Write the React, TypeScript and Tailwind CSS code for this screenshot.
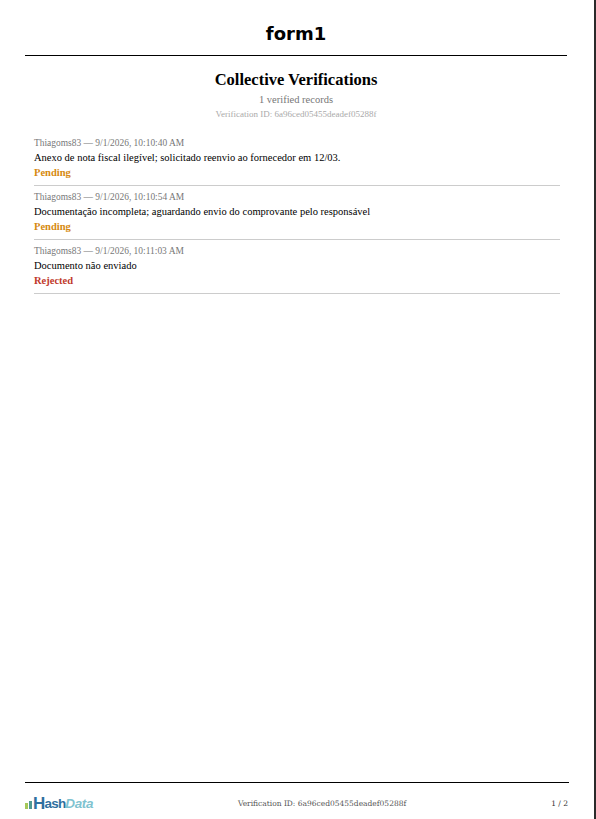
const records = [
  {
    meta: "Thiagoms83 — 9/1/2026, 10:10:40 AM",
    text: "Anexo de nota fiscal ilegível; solicitado reenvio ao fornecedor em 12/03.",
    status: "Pending",
    color: "text-[#d68910]",
  },
  {
    meta: "Thiagoms83 — 9/1/2026, 10:10:54 AM",
    text: "Documentação incompleta; aguardando envio do comprovante pelo responsável",
    status: "Pending",
    color: "text-[#d68910]",
  },
  {
    meta: "Thiagoms83 — 9/1/2026, 10:11:03 AM",
    text: "Documento não enviado",
    status: "Rejected",
    color: "text-[#c0392b]",
  },
];

const App = () => {
  return (
    <div className="flex h-[819px] w-[596px] overflow-hidden bg-white font-['Liberation_Serif',serif] text-black">
      <div className="flex min-w-0 flex-1 flex-col pl-[25px]">
        {/* Header */}
        <header className="mr-[27px] flex h-[56px] items-center justify-center border-b border-black pt-[13px]">
          <h1 className="font-['DejaVu_Sans',sans-serif] text-[18px] leading-none font-bold">form1</h1>
        </header>

        {/* Title */}
        <div className="mr-[27px] flex flex-col items-center pt-[14px]">
          <h2 className="text-[16.5px] leading-[20px] font-bold">Collective Verifications</h2>
          <p className="mt-[3px] text-[10.5px] leading-[14px] text-[#777]">1 verified records</p>
          <p className="mt-[1px] text-[9px] leading-[12px] text-[#aaa]">Verification ID: 6a96ced05455deadef05288f</p>
        </div>

        {/* Records */}
        <div className="mt-[12px] mr-[34px] ml-[9px] flex flex-1 flex-col">
          {records.map((r) => (
            <div key={r.meta} className="h-[54px] border-b border-[#ccc] pt-[5px]">
              <p className="text-[9.45px] leading-[13px] text-[#777]">{r.meta}</p>
              <p className="text-[10.5px] leading-[15px]">{r.text}</p>
              <p className={`text-[10.5px] leading-[15px] font-bold ${r.color}`}>{r.status}</p>
            </div>
          ))}
        </div>

        {/* Footer */}
        <footer className="mr-[25px] flex h-[37px] items-start justify-between border-t border-black pt-[12px] pr-[1px]">
          <div className="flex h-[18px] w-[68px] items-end font-['Liberation_Sans',sans-serif] leading-[18px] font-bold whitespace-nowrap">
            <svg width="8" height="8" viewBox="0 0 8 8" className="mb-[4px] shrink-0">
              <rect x="0" y="2" width="3" height="6" fill="#a5c85a" />
              <rect x="4" y="0" width="3" height="8" fill="#4f9a94" />
            </svg>
            <span className="text-[17px] tracking-[-0.8px] text-[#2f70a0]">H</span>
            <span className="text-[13.5px] tracking-[-0.8px] text-[#2f70a0]">ash</span>
            <span className="text-[13.5px] tracking-[-0.4px] text-[#7fc3d0] italic">Data</span>
          </div>
          <span className="font-['DejaVu_Serif',serif] text-[7.5px] leading-[18px] text-[#555]">Verification ID: 6a96ced05455deadef05288f</span>
          <span className="font-['DejaVu_Serif',serif] text-[7.5px] leading-[18px] text-[#333]">1 / 2</span>
        </footer>
      </div>

      {/* Window edge */}
      <div className="w-[2px] bg-[#2b2b2b]" />
    </div>
  );
};

export default App;
